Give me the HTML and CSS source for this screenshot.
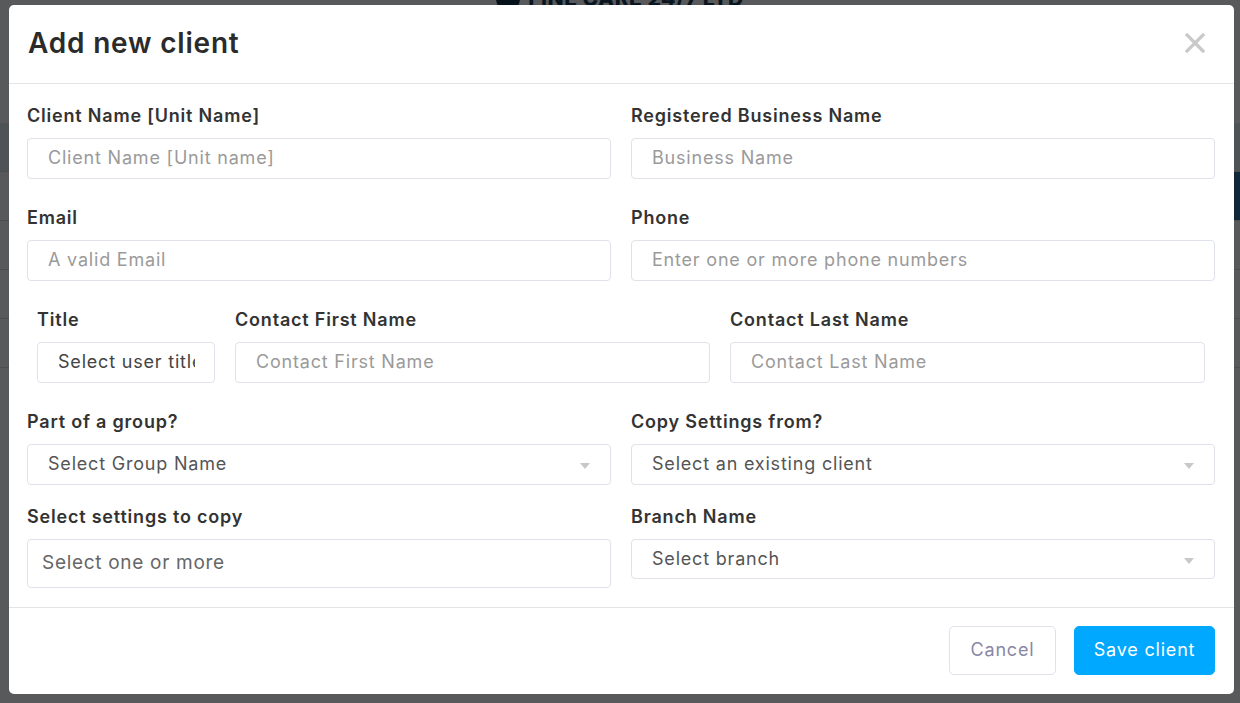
FILE: index.html
```html
<!DOCTYPE html>
<html lang="en">
<head>
    <meta charset="UTF-8">
    <meta name="viewport" content="width=device-width, initial-scale=1.0">
    <title>Add new client</title>
    <link rel="stylesheet" href="styles.css">
</head>
<body>
    <div class="page">
        <div class="brand">
            <span class="brand-mark"></span>
            <span class="brand-name">FINE CARE 24/7 LTD</span>
        </div>
        <div class="page-table">
            <div class="page-row page-row-head"></div>
            <div class="page-row page-row-accent"></div>
            <div class="page-row"></div>
            <div class="page-row"></div>
            <div class="page-row"></div>
        </div>
    </div>

    <div class="backdrop">
        <div class="modal">
            <div class="modal-header">
                <h1>Add new client</h1>
                <button class="close" type="button">
                    <svg width="20" height="20" viewBox="0 0 20 20">
                        <path d="M2 2 L18 18 M18 2 L2 18" stroke="#c9c9c9" stroke-width="3.2" stroke-linecap="square"/>
                    </svg>
                </button>
            </div>

            <div class="modal-body">
                <div class="row">
                    <div class="field">
                        <label>Client Name [Unit Name]</label>
                        <input type="text" placeholder="Client Name [Unit name]">
                    </div>
                    <div class="field">
                        <label>Registered Business Name</label>
                        <input type="text" placeholder="Business Name">
                    </div>
                </div>

                <div class="row">
                    <div class="field">
                        <label>Email</label>
                        <input type="text" placeholder="A valid Email">
                    </div>
                    <div class="field">
                        <label>Phone</label>
                        <input type="text" placeholder="Enter one or more phone numbers">
                    </div>
                </div>

                <div class="row row-contact">
                    <div class="field field-title">
                        <label>Title</label>
                        <div class="select select-plain"><span class="select-text">Select user title</span></div>
                    </div>
                    <div class="field">
                        <label>Contact First Name</label>
                        <input type="text" placeholder="Contact First Name">
                    </div>
                    <div class="field">
                        <label>Contact Last Name</label>
                        <input type="text" placeholder="Contact Last Name">
                    </div>
                </div>

                <div class="row row-tight">
                    <div class="field">
                        <label>Part of a group?</label>
                        <div class="select"><span class="select-text">Select Group Name</span><span class="caret"></span></div>
                    </div>
                    <div class="field">
                        <label>Copy Settings from?</label>
                        <div class="select"><span class="select-text">Select an existing client</span><span class="caret"></span></div>
                    </div>
                </div>

                <div class="row row-last">
                    <div class="field">
                        <label>Select settings to copy</label>
                        <div class="multi">Select one or more</div>
                    </div>
                    <div class="field">
                        <label>Branch Name</label>
                        <div class="select select-short"><span class="select-text">Select branch</span><span class="caret"></span></div>
                    </div>
                </div>
            </div>

            <div class="modal-footer">
                <button class="btn btn-cancel" type="button">Cancel</button>
                <button class="btn btn-save" type="button">Save client</button>
            </div>
        </div>
    </div>
</body>
</html>
```

FILE: styles.css
```css
body {
    margin: 0;
    padding: 0;
    font-family: Inter, "Open Sans", sans-serif;
    background-color: #f4f6f8;
    overflow: hidden;
}

/* page behind the modal */
.page {
    height: 703px;
}

.brand {
    display: flex;
    justify-content: center;
    align-items: center;
    gap: 8px;
    margin-top: -14px;
}

.brand-mark {
    width: 24px;
    height: 24px;
    border-radius: 50%;
    background-color: #12344d;
}

.brand-name {
    font-size: 21px;
    font-weight: 800;
    color: #1b3f5c;
    letter-spacing: 0.5px;
}

.page-table {
    margin-top: 112px;
}

.page-row {
    height: 48px;
    border-bottom: 1px solid #d6d6d6;
}

.page-row-head {
    background-color: #d9e8ee;
}

.page-row-accent {
    background: linear-gradient(to right, #f4f6f8 96%, #2f6fa0 96%);
}

.backdrop {
    position: fixed;
    top: 0;
    left: 0;
    right: 0;
    bottom: 0;
    background-color: rgba(0, 0, 0, 0.64);
    padding: 5px 6px 0 9px;
}

/* modal */
.modal {
    background-color: #fff;
    border-radius: 5px;
    width: 1225px;
}

.modal-header {
    display: flex;
    align-items: center;
    justify-content: space-between;
    height: 78px;
    padding: 0 29px 0 19px;
    border-bottom: 1px solid #e4e4e4;
}

.modal-header h1 {
    margin: 0 0 2px 0;
    font-size: 28px;
    font-weight: 600;
    letter-spacing: 0.8px;
    color: #2b2b2b;
}

.close {
    border: none;
    background: none;
    padding: 0;
    margin: 0 0 3px 0;
    display: flex;
    cursor: pointer;
}

.modal-body {
    padding: 20px 19px 19px 18px;
}

.row {
    display: flex;
    gap: 20px;
    margin-bottom: 27px;
}

.row-contact {
    padding: 0 10px 0 10px;
}

.row-tight {
    margin-bottom: 20px;
}

.row-last {
    margin-bottom: 0;
}

.field {
    flex: 1;
    display: flex;
    flex-direction: column;
    min-width: 0;
}

.field-title {
    flex: 0 0 178px;
}

label {
    font-size: 18px;
    font-weight: 600;
    letter-spacing: 0.8px;
    line-height: 24px;
    color: #333;
    margin-bottom: 10px;
}

input,
.select,
.multi {
    box-sizing: border-box;
    height: 41px;
    border: 1px solid #dfe2ea;
    border-radius: 4px;
    padding: 0 20px 2px 20px;
    font-family: inherit;
    font-size: 18px;
    letter-spacing: 0.8px;
    color: #555;
    background-color: #fff;
}

input::placeholder {
    color: #9a9a9a;
}

.select {
    display: flex;
    align-items: center;
    position: relative;
    white-space: nowrap;
}

.select-text {
    overflow: hidden;
}

.select-plain {
    color: #444;
    padding-right: 19px;
}

.select-short {
    height: 40px;
}

.caret {
    position: absolute;
    right: 20px;
    top: 18px;
    border-left: 5px solid transparent;
    border-right: 5px solid transparent;
    border-top: 6px solid #c8c8c8;
}

.multi {
    display: flex;
    align-items: center;
    height: 49px;
    padding: 0 14px 2px 14px;
    font-size: 19px;
    letter-spacing: 0.7px;
    color: #666;
}

/* footer */
.modal-footer {
    display: flex;
    justify-content: flex-end;
    gap: 18px;
    padding: 18px 19px 19px 19px;
    border-top: 1px solid #e4e4e4;
}

.btn {
    height: 49px;
    border-radius: 5px;
    font-family: inherit;
    font-size: 18px;
    letter-spacing: 0.8px;
    padding: 0 0 2px 0;
    cursor: pointer;
}

.btn-cancel {
    width: 107px;
    background-color: #fff;
    border: 1px solid #dfe2ea;
    color: #8a87a6;
}

.btn-save {
    width: 141px;
    background-color: #00a8ff;
    border: 1px solid #00a8ff;
    color: #fff;
}
```
